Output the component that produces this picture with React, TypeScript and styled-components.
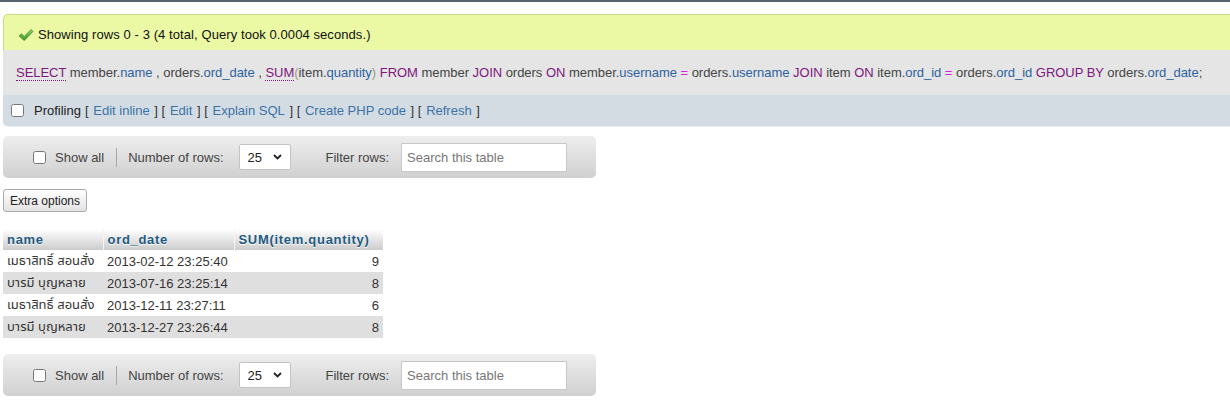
import React from "react";
import styled, { createGlobalStyle } from "styled-components";

const GlobalStyle = createGlobalStyle`
  html, body { margin: 0; padding: 0; background: #fff; overflow: hidden; }
  body {
    font-family: "Liberation Sans", "Noto Sans Thai", "DejaVu Sans", sans-serif;
    font-size: 13px;
    color: #444;
  }
  * { box-sizing: border-box; }
`;

const TopRule = styled.div`
  height: 2px;
  background: #56626d;
`;

const Content = styled.div`
  padding-left: 3px;
  margin-right: -12px;
`;

const ResultQuery = styled.div`
  margin-top: 12px;
  display: flex;
  flex-direction: column;
`;

const SuccessBox = styled.div`
  height: 36px;
  display: flex;
  align-items: center;
  padding-left: 14px;
  padding-top: 4px;
  background: #ebf8a4;
  border: 1px solid #c8da86;
  border-bottom: none;
  border-top-left-radius: 5px;
  color: #111;
  gap: 4px;
  letter-spacing: 0.08px;
`;

const SqlBox = styled.div`
  height: 45px;
  display: flex;
  align-items: center;
  padding-left: 13px;
  background: #e5e5e5;
  color: #444;
  white-space: nowrap;
  letter-spacing: -0.03px;
`;

const Kw = styled.span<{ $doc?: boolean }>`
  color: #80167f;
  ${(p) => (p.$doc ? "border-bottom: 1px dotted #80167f;" : "")}
`;
const Field = styled.span`
  color: #2d62a0;
`;
const Op = styled.span`
  color: #e21de2;
`;
const Bracket = styled.span`
  color: #9a9a80;
`;

const ToolsBar = styled.div`
  height: 31px;
  display: flex;
  align-items: center;
  padding-left: 8px;
  background: #d3dce3;
  border-bottom-left-radius: 5px;
  box-shadow: 0 1px 1px rgba(0, 0, 0, 0.08);
  color: #333;
`;

const Check = styled.input.attrs({ type: "checkbox" })`
  width: 13px;
  height: 13px;
  margin: 0;
`;

const ToolsLabel = styled.span`
  margin-left: 10px;
  color: #222;
`;

const Bracketed = styled.span`
  color: #333;
  margin-left: 4px;
`;

const ToolLink = styled.a`
  color: #3c72a6;
  text-decoration: none;
  margin: 0 4.7px;
`;

const NavBar = styled.div<{ $mt: number }>`
  margin-top: ${(p) => p.$mt}px;
  width: 593px;
  height: 42px;
  display: flex;
  align-items: center;
  padding-left: 30px;
  background: linear-gradient(#eeeeee, #d0d0d0);
  border-radius: 5px;
  color: #444;
`;

const NavText = styled.span<{ $ml: number }>`
  margin-left: ${(p) => p.$ml}px;
`;

const Separator = styled.span`
  width: 1px;
  height: 19px;
  background: #a8a8a8;
  margin-left: 12px;
`;

const SelectWrap = styled.div`
  position: relative;
  margin-left: 15px;
  width: 52px;
  height: 26px;
`;

const Select = styled.select`
  appearance: none;
  -webkit-appearance: none;
  width: 100%;
  height: 100%;
  border: 1px solid #c4c4c4;
  border-radius: 2px;
  background: #fff;
  font: inherit;
  color: #222;
  padding: 0 0 0 8px;
  margin: 0;
`;

const Chevron = styled.svg`
  position: absolute;
  right: 9px;
  top: 10px;
  pointer-events: none;
`;

const SearchInput = styled.input`
  margin-left: 12px;
  width: 166px;
  height: 29px;
  border: 1px solid #c8c8c8;
  background: #fff;
  font: inherit;
  padding: 0 0 0 5px;
  &::placeholder { color: #777; }
`;

const ExtraButton = styled.button`
  margin-top: 11px;
  align-self: flex-start;
  height: 23px;
  width: 84px;
  padding: 0;
  font-family: inherit;
  font-size: 12px;
  color: #222;
  background: linear-gradient(#ffffff, #e2e2e2);
  border: 1px solid #aaa;
  border-radius: 3px;
`;

const Column = styled.div`
  display: flex;
  flex-direction: column;
  align-items: flex-start;
`;

const Table = styled.table`
  margin-top: 17px;
  border-collapse: collapse;
  border-spacing: 0;
  table-layout: fixed;
  width: 380px;
`;

const Th = styled.th`
  height: 21px;
  padding: 0 4px;
  text-align: left;
  font-weight: bold;
  letter-spacing: 0.7px;
  color: #235a81;
  background: linear-gradient(#ffffff, #cccccc);
  border-right: 1px solid #f4f4f4;
  text-shadow: 0 1px 0 #fff;
  white-space: nowrap;
  &:last-child { border-right: none; }
`;

const Col = styled.col<{ $w: number }>`
  width: ${(p) => p.$w}px;
`;

const Tr = styled.tr<{ $even: boolean }>`
  background: ${(p) => (p.$even ? "#dfdfdf" : "#ffffff")};
`;

const Td = styled.td<{ $right?: boolean }>`
  height: 22px;
  padding: 0 4px;
  color: #333;
  white-space: nowrap;
  text-align: ${(p) => (p.$right ? "right" : "left")};
`;

const CheckIcon = () => (
  <svg width="16" height="14" viewBox="0 0 16 14">
    <defs>
      <linearGradient id="chk" x1="0" y1="0" x2="0" y2="1">
        <stop offset="0" stopColor="#8fd35c" />
        <stop offset="1" stopColor="#3e9a25" />
      </linearGradient>
    </defs>
    <path
      d="M1 8 L3.5 5.8 L6.2 8.4 L13.2 1.5 L15 3.4 L6.3 12.5 Z"
      fill="url(#chk)"
      stroke="#4a8a32"
      strokeWidth="0.8"
      strokeLinejoin="round"
    />
  </svg>
);

const Navigation = ({ mt }: { mt: number }) => (
  <NavBar $mt={mt}>
    <Check />
    <NavText $ml={9}>Show all</NavText>
    <Separator />
    <NavText $ml={11}>Number of rows:</NavText>
    <SelectWrap>
      <Select defaultValue="25">
        <option>25</option>
      </Select>
      <Chevron width="9" height="6" viewBox="0 0 9 6">
        <path d="M1 1 L4.5 4.5 L8 1" fill="none" stroke="#222" strokeWidth="1.8" />
      </Chevron>
    </SelectWrap>
    <NavText $ml={35}>Filter rows:</NavText>
    <SearchInput placeholder="Search this table" />
  </NavBar>
);

const rows = [
  ["เมธาสิทธิ์ สอนสั่ง", "2013-02-12 23:25:40", "9"],
  ["บารมี บุญหลาย", "2013-07-16 23:25:14", "8"],
  ["เมธาสิทธิ์ สอนสั่ง", "2013-12-11 23:27:11", "6"],
  ["บารมี บุญหลาย", "2013-12-27 23:26:44", "8"],
];

export default function App() {
  return (
    <>
      <GlobalStyle />
      <TopRule />
      <Content>
        <ResultQuery>
          <SuccessBox>
            <CheckIcon />
            <span>Showing rows 0 - 3 (4 total, Query took 0.0004 seconds.)</span>
          </SuccessBox>
          <SqlBox>
            <span>
              <Kw $doc>SELECT</Kw> member.<Field>name</Field> , orders.<Field>ord_date</Field> ,{" "}
              <Kw $doc>SUM</Kw>
              <Bracket>(</Bracket>item.<Field>quantity</Field>
              <Bracket>)</Bracket> <Kw>FROM</Kw> member <Kw>JOIN</Kw> orders <Kw>ON</Kw> member.
              <Field>username</Field> <Op>=</Op> orders.<Field>username</Field> <Kw>JOIN</Kw> item{" "}
              <Kw>ON</Kw> item.<Field>ord_id</Field> <Op>=</Op> orders.<Field>ord_id</Field>{" "}
              <Kw>GROUP BY</Kw> orders.<Field>ord_date</Field>;
            </span>
          </SqlBox>
          <ToolsBar>
            <Check />
            <ToolsLabel>Profiling</ToolsLabel>
            <Bracketed>
              [<ToolLink href="#">Edit inline</ToolLink>] [<ToolLink href="#">Edit</ToolLink>] [
              <ToolLink href="#">Explain SQL</ToolLink>] [<ToolLink href="#">Create PHP code</ToolLink>] [
              <ToolLink href="#">Refresh</ToolLink>]
            </Bracketed>
          </ToolsBar>
        </ResultQuery>
        <Column>
          <Navigation mt={10} />
          <ExtraButton>Extra options</ExtraButton>
          <Table>
            <colgroup>
              <Col $w={100} />
              <Col $w={131} />
              <Col $w={149} />
            </colgroup>
            <thead>
              <tr>
                <Th>name</Th>
                <Th>ord_date</Th>
                <Th>SUM(item.quantity)</Th>
              </tr>
            </thead>
            <tbody>
              {rows.map((r, i) => (
                <Tr key={i} $even={i % 2 === 1}>
                  <Td>{r[0]}</Td>
                  <Td>{r[1]}</Td>
                  <Td $right>{r[2]}</Td>
                </Tr>
              ))}
            </tbody>
          </Table>
          <Navigation mt={16} />
        </Column>
      </Content>
    </>
  );
}
